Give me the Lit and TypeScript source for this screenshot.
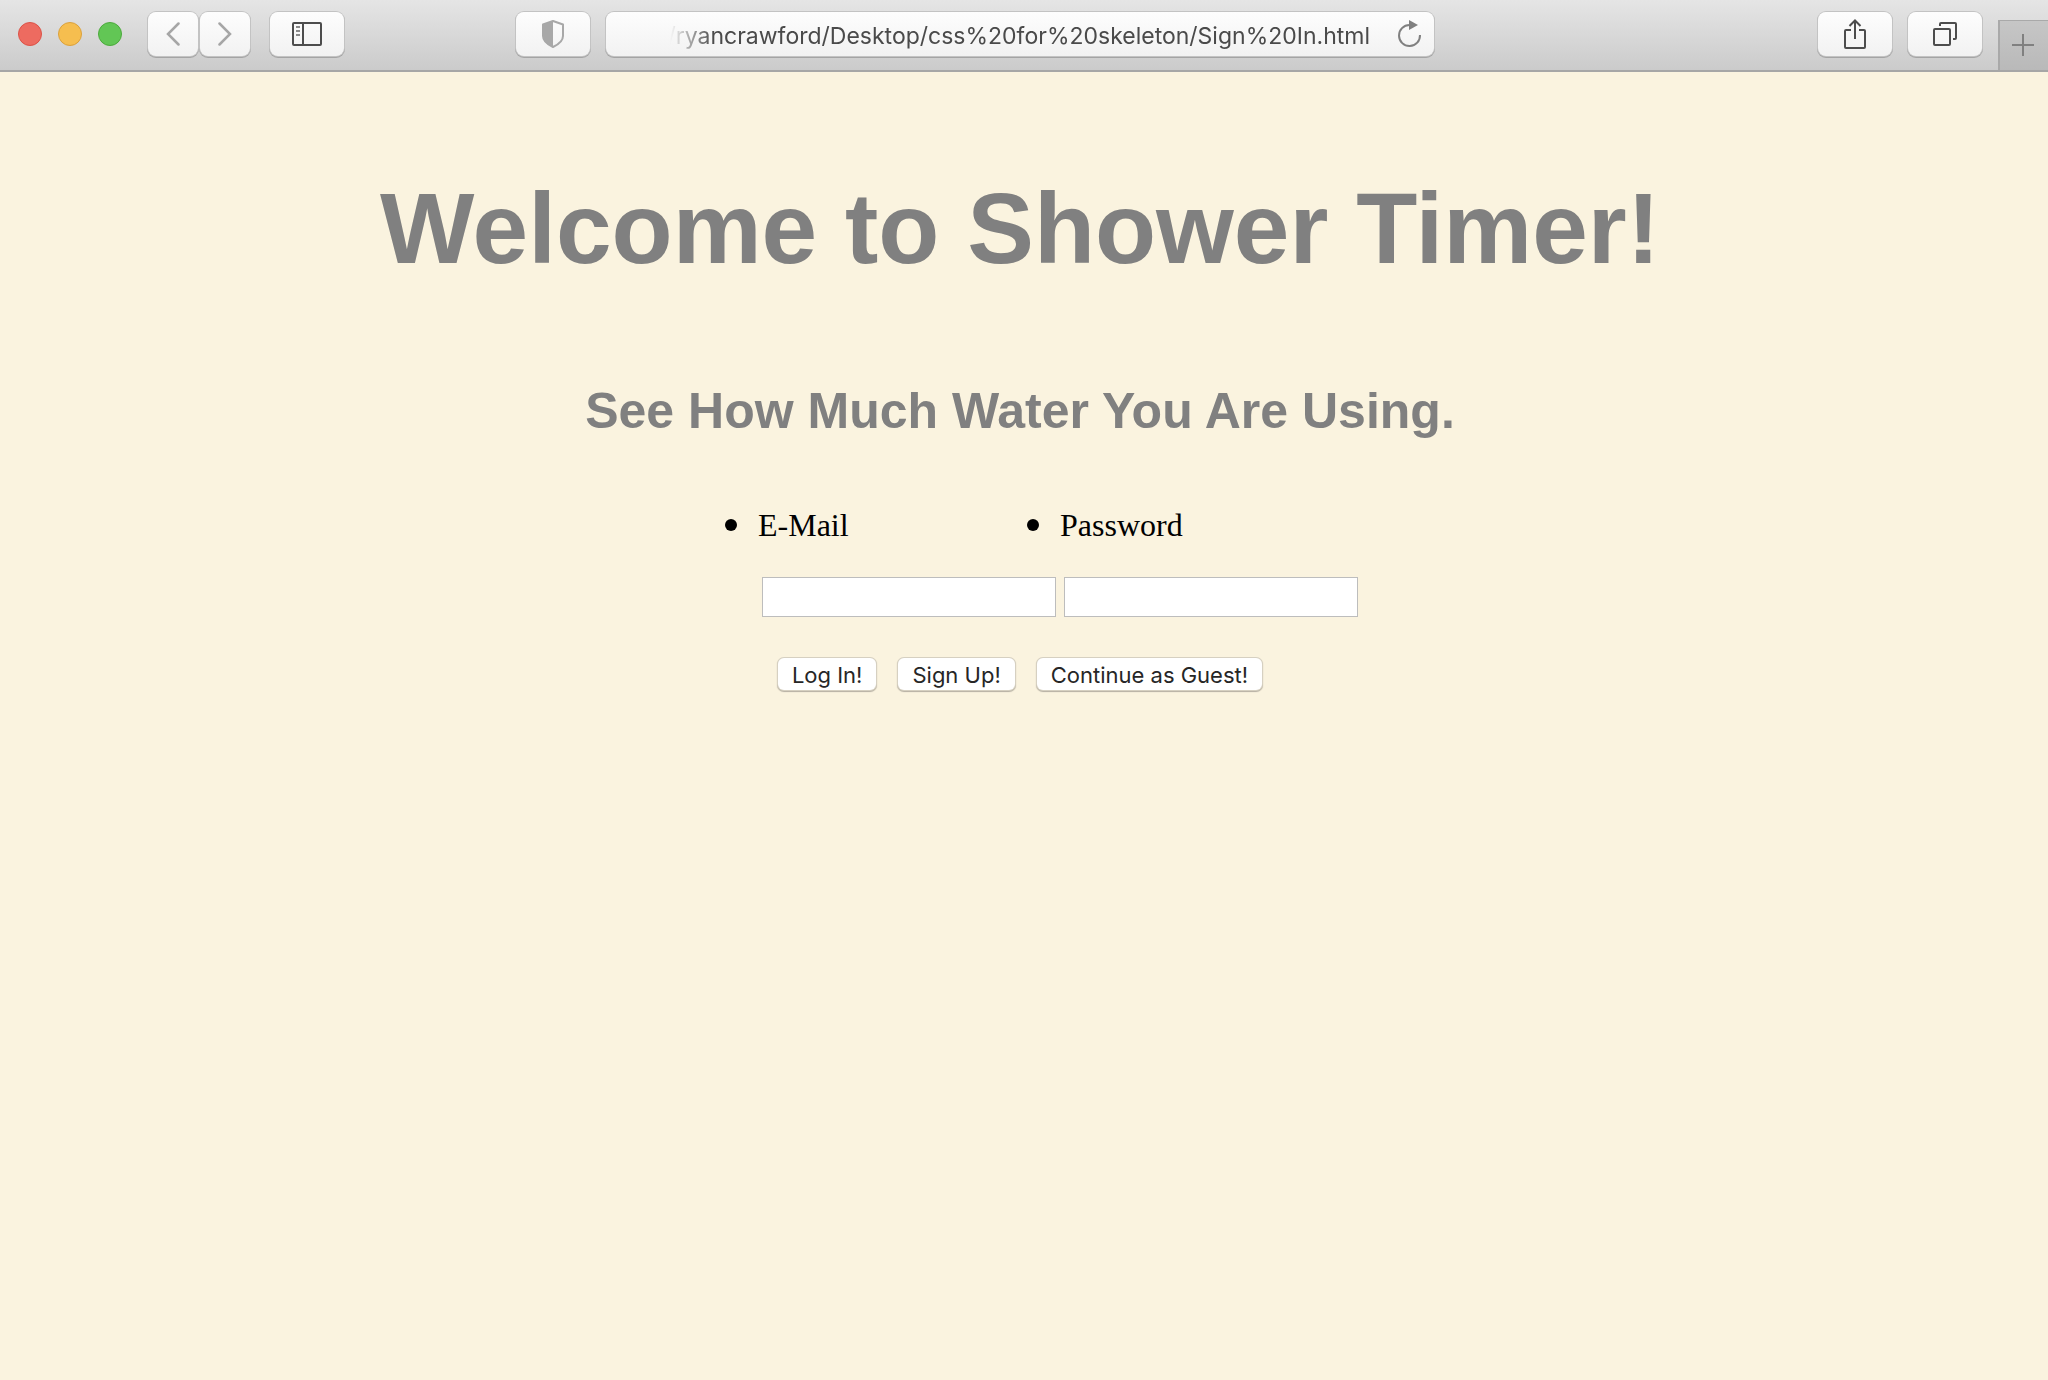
import { LitElement, html, css, svg } from "lit";
import { customElement, state } from "lit/decorators.js";

const icon = (w: number, h: number, body: unknown) => html`<svg
  width=${w}
  height=${h}
  viewBox="0 0 ${w} ${h}"
  fill="none"
  aria-hidden="true"
>${body}</svg>`;

@customElement("browser-toolbar")
export class BrowserToolbar extends LitElement {
  static styles = css`
    :host {
      display: block;
      font-family: Inter, "Liberation Sans", sans-serif;
    }
    .bar {
      box-sizing: border-box;
      display: grid;
      grid-template-columns: minmax(344px, 516fr) minmax(0, 918fr) minmax(246px, 614fr);
      height: 72px;
      background: linear-gradient(#e5e5e5, #cbcbcb);
      border-bottom: 2px solid #a6a6a6;
    }
    .group {
      display: flex;
      align-items: flex-start;
      padding-top: 12px;
      gap: 16px;
    }
    .start {
      padding-left: 18px;
      gap: 20px;
    }
    .end {
      justify-content: flex-end;
    }
    .lights {
      display: flex;
      gap: 16px;
      padding: 10px 6px 0 0;
    }
    button {
      font: inherit;
      margin: 0;
      padding: 0;
    }
    .light {
      box-sizing: border-box;
      width: 24px;
      height: 24px;
      border-radius: 50%;
      border: 1px solid;
    }
    .close {
      background: #ed6b60;
      border-color: #dc5247;
    }
    .minimize {
      background: #f6be4f;
      border-color: #dba13c;
    }
    .zoom {
      background: #62c655;
      border-color: #4caa3c;
    }
    .pair {
      display: flex;
      gap: 2px;
    }
    .tool,
    .address {
      box-sizing: border-box;
      height: 44px;
      border: 0;
      border-radius: 8px;
      background: linear-gradient(#fdfdfd, #f2f2f2);
      box-shadow: 0 0 0 1px #c3c3c3, 0 1px 0 1px #a4a4a4;
    }
    .tool {
      display: grid;
      place-items: center;
      flex: none;
      width: 74px;
    }
    .narrow {
      width: 50px;
    }
    .address {
      flex: 1;
      min-width: 0;
      display: flex;
      align-items: center;
      gap: 26px;
      padding: 0 12px 0 48px;
    }
    .url {
      flex: 1;
      min-width: 0;
      display: flex;
      justify-content: flex-end;
      overflow: hidden;
      white-space: nowrap;
      font-size: 23px;
      line-height: 32px;
      padding-top: 4px;
      color: #4a4a4a;
      -webkit-mask-image: linear-gradient(90deg, transparent 16px, #000 60px);
      mask-image: linear-gradient(90deg, transparent 16px, #000 60px);
    }
    .reload {
      flex: none;
      display: grid;
      border: 0;
      background: none;
    }
    .newtab {
      box-sizing: border-box;
      flex: none;
      width: 50px;
      height: 50px;
      margin-top: 8px;
      padding: 0 2px 2px 0;
      display: grid;
      place-items: center;
      border: 0;
      border-top: 1px solid #a9a9a9;
      border-left: 2px solid #a9a9a9;
      background: linear-gradient(#c6c6c6, #b9b9b9);
    }
  `;

  render() {
    return html`
      <div class="bar">
        <div class="group start">
          <div class="lights">
            <button class="light close" aria-label="Close"></button>
            <button class="light minimize" aria-label="Minimize"></button>
            <button class="light zoom" aria-label="Zoom"></button>
          </div>
          <div class="pair">
            <button class="tool narrow" aria-label="Back">
              ${icon(14, 24, svg`<path d="M12.500 1.500 2 12l10.500 10.500" stroke="#a6a6a6" stroke-width="2.500" stroke-linecap="round"/>`)}
            </button>
            <button class="tool narrow" aria-label="Forward">
              ${icon(14, 24, svg`<path d="M1.500 1.500 12 12 1.500 22.500" stroke="#a6a6a6" stroke-width="2.500" stroke-linecap="round"/>`)}
            </button>
          </div>
          <button class="tool" aria-label="Show sidebar">
            ${icon(30, 24, svg`<rect x="1" y="1" width="28" height="22" rx="1" stroke="#4d4d4d" stroke-width="2"/><path d="M11 1v22" stroke="#4d4d4d" stroke-width="2"/><path d="M4 5h4M4 9h4M4 13h4" stroke="#8a8a8a" stroke-width="2"/>`)}
          </button>
        </div>
        <div class="group">
          <button class="tool" aria-label="Privacy report">
            ${icon(24, 28, svg`<path d="M12 1 22 4.500V16c0 4.500-3.500 8-10 11C5.500 24 2 20.500 2 16V4.500z" stroke="#a8a8a8" stroke-width="2" stroke-linejoin="round"/><path d="M12 1 2 4.500V16c0 4.500 3.500 8 10 11z" fill="#a8a8a8"/>`)}
          </button>
          <div class="address">
            <span class="url">/ryancrawford/Desktop/css%20for%20skeleton/Sign%20In.html</span>
            <button class="reload" aria-label="Reload">
              ${icon(26, 28, svg`<path d="M13.500 5A10.500 10.500 0 1 0 24 15" stroke="#808080" stroke-width="2"/><path d="M13 0v10l9-5z" fill="#808080"/>`)}
            </button>
          </div>
        </div>
        <div class="group end">
          <button class="tool" aria-label="Share">
            ${icon(24, 32, svg`<path d="M8 12H3a1 1 0 0 0-1 1v16a1 1 0 0 0 1 1h18a1 1 0 0 0 1-1V13a1 1 0 0 0-1-1h-5M12 21V3M6.500 8 12 2.500 17.500 8" stroke="#4d4d4d" stroke-width="2"/>`)}
          </button>
          <button class="tool" aria-label="Tab overview">
            ${icon(24, 24, svg`<rect x="1" y="7" width="16" height="16" rx="1" stroke="#4d4d4d" stroke-width="2"/><path d="M7 4V2a1 1 0 0 1 1-1h14a1 1 0 0 1 1 1v14a1 1 0 0 1-1 1h-2" stroke="#4d4d4d" stroke-width="2"/>`)}
          </button>
          <button class="newtab" aria-label="New tab">
            ${icon(22, 22, svg`<path d="M11 0v22M0 11h22" stroke="#808080" stroke-width="2"/>`)}
          </button>
        </div>
      </div>
    `;
  }
}

@customElement("app-root")
export class AppRoot extends LitElement {
  @state() private email = "";
  @state() private password = "";

  static styles = css`
    :host {
      display: flex;
      flex-direction: column;
      min-height: 100vh;
      background: #faf3df;
    }
    .page {
      flex: 1;
      display: flex;
      flex-direction: column;
      align-items: center;
      padding: 98px 16px 16px 8px;
      font-family: "Liberation Serif", serif;
    }
    h1,
    h2 {
      margin: 0;
      color: #808080;
      font-family: "Liberation Sans", sans-serif;
      font-weight: bold;
      text-align: center;
    }
    h1 {
      font-size: 100px;
      line-height: 116px;
      margin-bottom: 96px;
    }
    h2 {
      font-size: 50px;
      line-height: 58px;
    }
    .form {
      display: flex;
      flex-direction: column;
      align-items: center;
    }
    .labels,
    .fields {
      display: grid;
      grid-template-columns: 302px 302px;
      margin: 0;
      padding: 0 0 0 80px;
      list-style: none;
    }
    .labels {
      margin: 67px 0 34px;
      font-size: 32px;
      line-height: 36px;
    }
    .labels li {
      display: flex;
      align-items: center;
      gap: 21px;
      margin-left: -33px;
    }
    .labels li::before {
      content: "";
      width: 12px;
      height: 12px;
      border-radius: 50%;
      background: #000;
    }
    .fields input {
      box-sizing: border-box;
      height: 40px;
      margin: 0 4px;
      padding: 4px;
      border: 1px solid #bdbdbd;
      border-radius: 0;
      background: #fff;
      font-family: Inter, sans-serif;
      font-size: 22px;
    }
    .actions {
      display: flex;
      gap: 22px;
      margin-top: 41px;
    }
    .actions button {
      padding: 2px 14px 0;
      border: 0;
      border-radius: 6px;
      background: #fff;
      box-shadow: 0 0 0 1px #d6d0c1, 0 1px 1px 1px #b5afa2;
      color: #262626;
      font-family: Inter, "Liberation Sans", sans-serif;
      font-size: 22px;
      line-height: 30px;
    }
  `;

  render() {
    return html`
      <browser-toolbar></browser-toolbar>
      <main class="page">
        <h1>Welcome to Shower Timer!</h1>
        <h2>See How Much Water You Are Using.</h2>
        <form class="form" @submit=${(e: Event) => e.preventDefault()}>
          <ul class="labels">
            <li><label for="email">E-Mail</label></li>
            <li><label for="password">Password</label></li>
          </ul>
          <div class="fields">
            <input
              id="email"
              type="text"
              .value=${this.email}
              @input=${(e: Event) => (this.email = (e.target as HTMLInputElement).value)}
            />
            <input
              id="password"
              type="password"
              .value=${this.password}
              @input=${(e: Event) => (this.password = (e.target as HTMLInputElement).value)}
            />
          </div>
          <div class="actions">
            <button type="submit">Log In!</button>
            <button type="button">Sign Up!</button>
            <button type="button">Continue as Guest!</button>
          </div>
        </form>
      </main>
    `;
  }
}
